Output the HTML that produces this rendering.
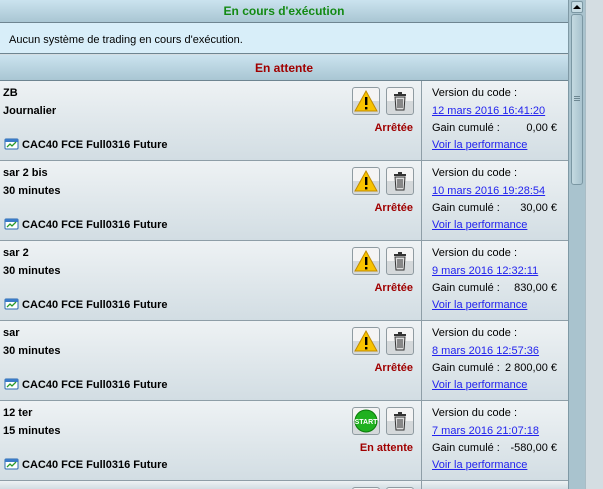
<!DOCTYPE html>
<html style="overflow:hidden;width:603px;height:489px"><head><meta charset="utf-8"><style>
*{margin:0;padding:0;box-sizing:border-box}
body{width:603px;height:489px;overflow:hidden;font-family:"Liberation Sans",Arial,sans-serif;font-size:11px;color:#000;background:#d4dde2;position:relative}
.hd{position:absolute;left:0;width:568px;background:linear-gradient(#cbe3ef,#a9c6d3);border-bottom:1px solid #6e8591;text-align:center;font-weight:bold;font-size:12px}
.msg{position:absolute;left:0;top:23px;width:568px;height:31px;background:#d8eef9;border-bottom:1px solid #6e8591;padding:11px 0 0 9px}
.row{position:absolute;left:0;width:568px;height:80px;background:linear-gradient(#eef2f4,#d2dde3);border-bottom:1px solid #8e9ea7;overflow:hidden}
.row .div{position:absolute;left:421px;top:0;width:1px;height:79px;background:#8e9ea7}
.t{position:absolute;white-space:nowrap}
.b{font-weight:bold}
.btn{position:absolute;top:6px;width:28px;height:28px;border:1px solid #8f9ba1;border-radius:3px;background:linear-gradient(#f4f4f4 50%,#d5d9db 50%)}
.st{position:absolute;right:155px;top:41px;color:#a00000;font-weight:bold;font-size:11px}
a{color:#2222ee;text-decoration:underline}
.sb{position:absolute;left:568px;top:0;width:17px;height:489px;background:#a9c3ce;border-left:1px solid #7f99a5}
.th{position:absolute;left:571px;top:14px;width:12px;height:171px;border:1px solid #7b97a3;border-radius:3px;background:linear-gradient(90deg,#c4d9e1,#a8c3ce)}
</style></head><body>
<div class="hd" style="top:0;height:23px;padding-top:4px;color:#138a13">En cours d'exécution</div>
<div class="msg">Aucun système de trading en cours d'exécution.</div>
<div class="hd" style="top:55px;height:26px;padding-top:6px;color:#a00000">En attente</div>

<div class="row" style="top:81px">
<div class="t b" style="left:3px;top:6px">ZB</div><div class="t b" style="left:3px;top:24px">Journalier</div>
<svg class="t" style="left:3px;top:57px" width="16" height="12"><rect x="2" y="1" width="13" height="10" rx="1" fill="#fff" stroke="#2a6ab0"/><rect x="2" y="1" width="13" height="3" fill="#3a7cc8"/><polyline points="4,9 7,6 9,8 13,4" fill="none" stroke="#2a9a2a" stroke-width="1.3"/></svg>
<div class="t b" style="left:22px;top:58px">CAC40 FCE Full0316 Future</div>
<div class="btn" style="left:352px"><svg width="26" height="26"><polygon points="13,3 24,23 2,23" fill="#f8c300" stroke="#c08a00"/><rect x="12" y="9" width="2.4" height="8" fill="#000"/><rect x="12" y="19" width="2.4" height="2.4" fill="#000"/></svg></div>
<div class="btn" style="left:386px"><svg width="26" height="26"><rect x="7" y="6" width="12" height="2" fill="#333"/><rect x="11" y="4" width="4" height="2" fill="#333"/><path d="M8 9h10l-1 13H9z" fill="#ddd" stroke="#333"/><path d="M11 11v9M13 11v9M15 11v9" stroke="#333"/></svg></div>
<div class="st">Arrêtée</div><div class="div"></div>
<div class="t" style="left:432px;top:6px">Version du code :</div>
<a class="t" style="left:432px;top:24px">12 mars 2016 16:41:20</a>
<div class="t" style="left:432px;top:41px">Gain cumulé :</div><div class="t" style="right:11px;top:41px">0,00 €</div>
<a class="t" style="left:432px;top:58px">Voir la performance</a>
</div>

<div class="row" style="top:161px">
<div class="t b" style="left:3px;top:6px">sar 2 bis</div><div class="t b" style="left:3px;top:24px">30 minutes</div>
<svg class="t" style="left:3px;top:57px" width="16" height="12"><rect x="2" y="1" width="13" height="10" rx="1" fill="#fff" stroke="#2a6ab0"/><rect x="2" y="1" width="13" height="3" fill="#3a7cc8"/><polyline points="4,9 7,6 9,8 13,4" fill="none" stroke="#2a9a2a" stroke-width="1.3"/></svg>
<div class="t b" style="left:22px;top:58px">CAC40 FCE Full0316 Future</div>
<div class="btn" style="left:352px"><svg width="26" height="26"><polygon points="13,3 24,23 2,23" fill="#f8c300" stroke="#c08a00"/><rect x="12" y="9" width="2.4" height="8" fill="#000"/><rect x="12" y="19" width="2.4" height="2.4" fill="#000"/></svg></div>
<div class="btn" style="left:386px"><svg width="26" height="26"><rect x="7" y="6" width="12" height="2" fill="#333"/><rect x="11" y="4" width="4" height="2" fill="#333"/><path d="M8 9h10l-1 13H9z" fill="#ddd" stroke="#333"/><path d="M11 11v9M13 11v9M15 11v9" stroke="#333"/></svg></div>
<div class="st">Arrêtée</div><div class="div"></div>
<div class="t" style="left:432px;top:6px">Version du code :</div>
<a class="t" style="left:432px;top:24px">10 mars 2016 19:28:54</a>
<div class="t" style="left:432px;top:41px">Gain cumulé :</div><div class="t" style="right:11px;top:41px">30,00 €</div>
<a class="t" style="left:432px;top:58px">Voir la performance</a>
</div>

<div class="row" style="top:241px">
<div class="t b" style="left:3px;top:6px">sar 2</div><div class="t b" style="left:3px;top:24px">30 minutes</div>
<svg class="t" style="left:3px;top:57px" width="16" height="12"><rect x="2" y="1" width="13" height="10" rx="1" fill="#fff" stroke="#2a6ab0"/><rect x="2" y="1" width="13" height="3" fill="#3a7cc8"/><polyline points="4,9 7,6 9,8 13,4" fill="none" stroke="#2a9a2a" stroke-width="1.3"/></svg>
<div class="t b" style="left:22px;top:58px">CAC40 FCE Full0316 Future</div>
<div class="btn" style="left:352px"><svg width="26" height="26"><polygon points="13,3 24,23 2,23" fill="#f8c300" stroke="#c08a00"/><rect x="12" y="9" width="2.4" height="8" fill="#000"/><rect x="12" y="19" width="2.4" height="2.4" fill="#000"/></svg></div>
<div class="btn" style="left:386px"><svg width="26" height="26"><rect x="7" y="6" width="12" height="2" fill="#333"/><rect x="11" y="4" width="4" height="2" fill="#333"/><path d="M8 9h10l-1 13H9z" fill="#ddd" stroke="#333"/><path d="M11 11v9M13 11v9M15 11v9" stroke="#333"/></svg></div>
<div class="st">Arrêtée</div><div class="div"></div>
<div class="t" style="left:432px;top:6px">Version du code :</div>
<a class="t" style="left:432px;top:24px">9 mars 2016 12:32:11</a>
<div class="t" style="left:432px;top:41px">Gain cumulé :</div><div class="t" style="right:11px;top:41px">830,00 €</div>
<a class="t" style="left:432px;top:58px">Voir la performance</a>
</div>

<div class="row" style="top:321px">
<div class="t b" style="left:3px;top:6px">sar</div><div class="t b" style="left:3px;top:24px">30 minutes</div>
<svg class="t" style="left:3px;top:57px" width="16" height="12"><rect x="2" y="1" width="13" height="10" rx="1" fill="#fff" stroke="#2a6ab0"/><rect x="2" y="1" width="13" height="3" fill="#3a7cc8"/><polyline points="4,9 7,6 9,8 13,4" fill="none" stroke="#2a9a2a" stroke-width="1.3"/></svg>
<div class="t b" style="left:22px;top:58px">CAC40 FCE Full0316 Future</div>
<div class="btn" style="left:352px"><svg width="26" height="26"><polygon points="13,3 24,23 2,23" fill="#f8c300" stroke="#c08a00"/><rect x="12" y="9" width="2.4" height="8" fill="#000"/><rect x="12" y="19" width="2.4" height="2.4" fill="#000"/></svg></div>
<div class="btn" style="left:386px"><svg width="26" height="26"><rect x="7" y="6" width="12" height="2" fill="#333"/><rect x="11" y="4" width="4" height="2" fill="#333"/><path d="M8 9h10l-1 13H9z" fill="#ddd" stroke="#333"/><path d="M11 11v9M13 11v9M15 11v9" stroke="#333"/></svg></div>
<div class="st">Arrêtée</div><div class="div"></div>
<div class="t" style="left:432px;top:6px">Version du code :</div>
<a class="t" style="left:432px;top:24px">8 mars 2016 12:57:36</a>
<div class="t" style="left:432px;top:41px">Gain cumulé :</div><div class="t" style="right:11px;top:41px">2 800,00 €</div>
<a class="t" style="left:432px;top:58px">Voir la performance</a>
</div>

<div class="row" style="top:401px">
<div class="t b" style="left:3px;top:6px">12 ter</div><div class="t b" style="left:3px;top:24px">15 minutes</div>
<svg class="t" style="left:3px;top:57px" width="16" height="12"><rect x="2" y="1" width="13" height="10" rx="1" fill="#fff" stroke="#2a6ab0"/><rect x="2" y="1" width="13" height="3" fill="#3a7cc8"/><polyline points="4,9 7,6 9,8 13,4" fill="none" stroke="#2a9a2a" stroke-width="1.3"/></svg>
<div class="t b" style="left:22px;top:58px">CAC40 FCE Full0316 Future</div>
<div class="btn" style="left:352px"><svg width="26" height="26"><circle cx="13" cy="13" r="11" fill="#1fb11f" stroke="#0a7a0a"/><text x="13" y="16" font-size="7" font-weight="bold" fill="#fff" text-anchor="middle" font-family="Liberation Sans">START</text></svg></div>
<div class="btn" style="left:386px"><svg width="26" height="26"><rect x="7" y="6" width="12" height="2" fill="#333"/><rect x="11" y="4" width="4" height="2" fill="#333"/><path d="M8 9h10l-1 13H9z" fill="#ddd" stroke="#333"/><path d="M11 11v9M13 11v9M15 11v9" stroke="#333"/></svg></div>
<div class="st">En attente</div><div class="div"></div>
<div class="t" style="left:432px;top:6px">Version du code :</div>
<a class="t" style="left:432px;top:24px">7 mars 2016 21:07:18</a>
<div class="t" style="left:432px;top:41px">Gain cumulé :</div><div class="t" style="right:11px;top:41px">-580,00 €</div>
<a class="t" style="left:432px;top:58px">Voir la performance</a>
</div>

<div class="row" style="top:481px;height:8px;border-bottom:none">
<div class="btn" style="left:352px"></div><div class="btn" style="left:386px"></div><div class="div"></div>
</div>

<div class="sb"></div>
<div style="position:absolute;left:571px;top:1px;width:12px;height:12px;border:1px solid #7b97a3;border-radius:2px;background:#c8dde5"><svg width="10" height="10"><polygon points="5,3 9,7 1,7" fill="#000"/></svg></div>
<div class="th"><div style="position:absolute;left:2px;top:81px;width:6px;height:5px;border-top:1px solid #6d8792;border-bottom:1px solid #6d8792"></div><div style="position:absolute;left:2px;top:83px;width:6px;height:1px;background:#6d8792"></div></div>
<div style="position:absolute;left:585px;top:0;width:1px;height:489px;background:#a9bcc5"></div>
</body></html>
